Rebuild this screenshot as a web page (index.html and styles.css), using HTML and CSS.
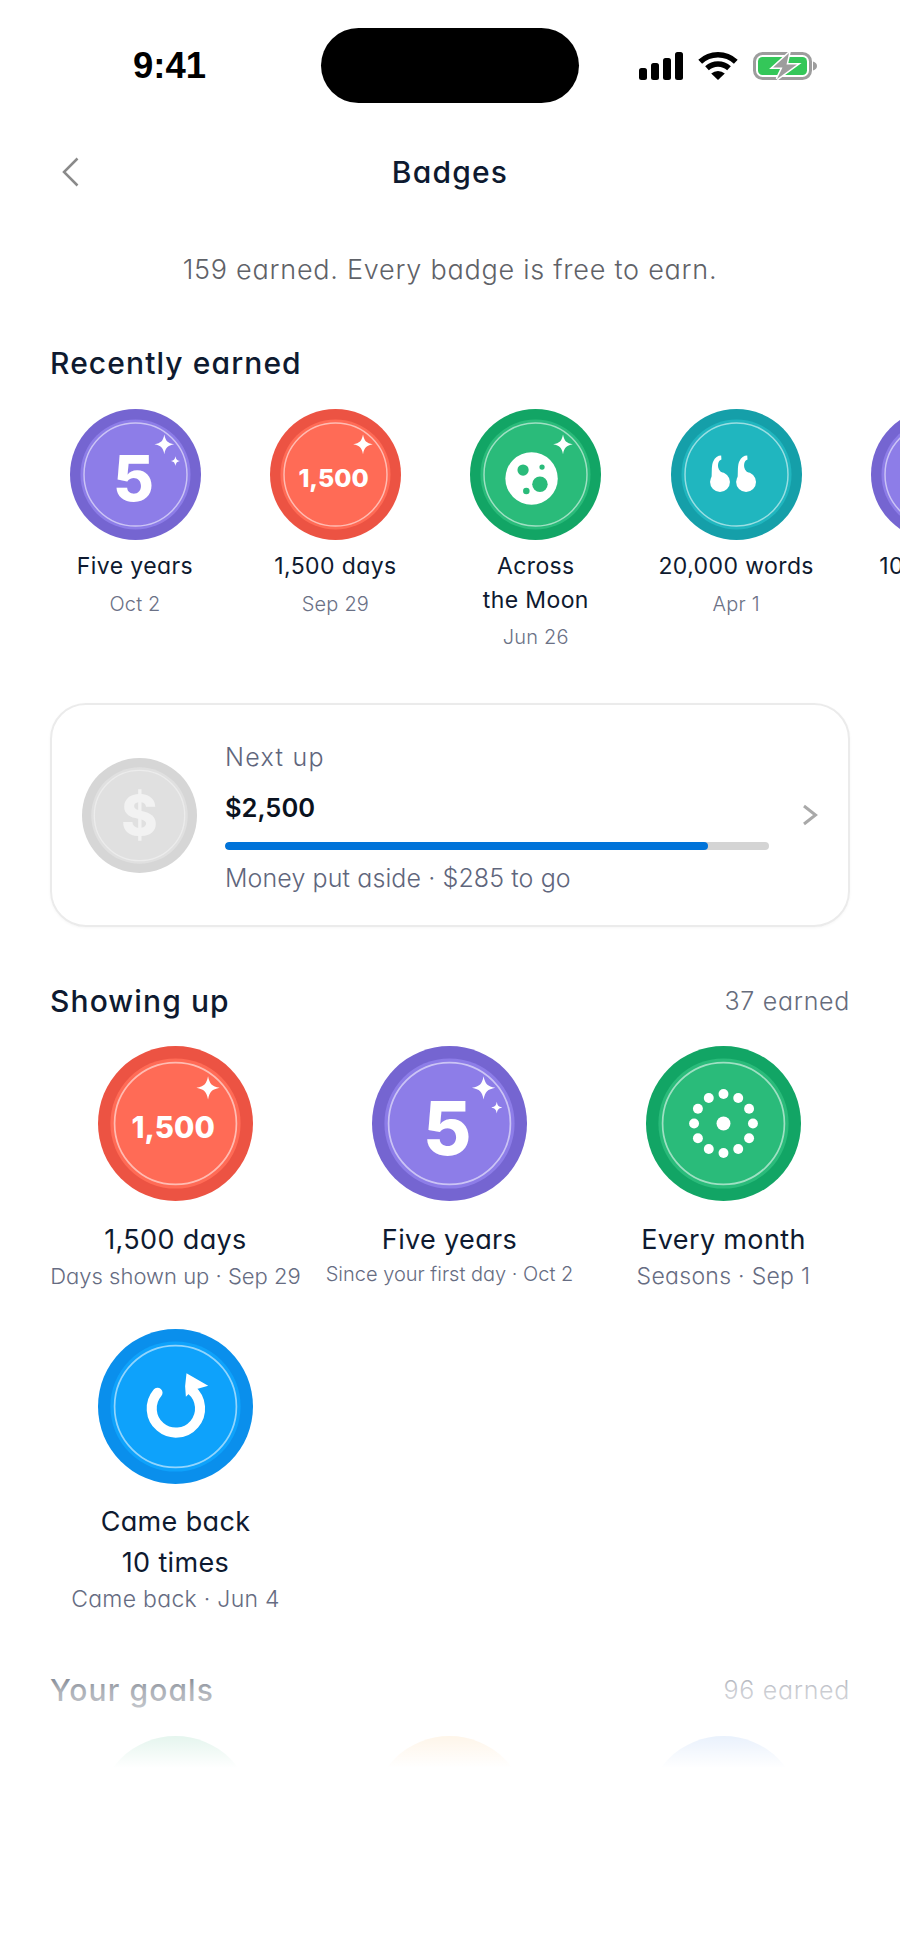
FILE: index.html
```html
<!DOCTYPE html>
<html lang="en">
<head>
<meta charset="utf-8">
<title>Badges</title>
<link rel="stylesheet" href="styles.css">
</head>
<body>
<div class="page">
  <div class="status">
    <div class="time">9:41</div>
    <div class="island"></div>
    <div class="status-icons">
      <svg class="i-signal" viewBox="0 0 44 28"><rect x="0" y="16" width="8" height="12" rx="2.5"/><rect x="12" y="11" width="8" height="17" rx="2.5"/><rect x="24" y="6" width="8" height="22" rx="2.5"/><rect x="36" y="0" width="8" height="28" rx="2.5"/></svg>
      <svg class="i-wifi" viewBox="0 0 40 28"><path class="wifi-arc" d="M2.2 9.8A26 26 0 0 1 37.8 9.8"/><path class="wifi-arc" d="M9 16.2A16.5 16.5 0 0 1 31 16.2"/><path d="M13.2 21.4L20 28L26.8 21.4A10.5 10.5 0 0 0 13.2 21.4Z"/></svg>
      <svg class="i-batt" viewBox="0 0 64 28"><rect class="batt-shell" x="1.5" y="1.5" width="56" height="25" rx="8"/><path class="batt-cap" d="M60 9.5C62.5 10 64 12 64 14S62.5 18 60 18.5Z"/><rect class="batt-fill" x="5" y="5" width="49" height="18" rx="4.5"/><path class="batt-bolt" d="M36 1L20 15.5H29.5L24 27L44 12.5H33.5Z"/></svg>
    </div>
  </div>

  <div class="nav">
    <svg class="chev-back" viewBox="0 0 17 30"><path d="M15.5 1.5L2 15L15.5 28.5"/></svg>
    <h1 class="title">Badges</h1>
    <span></span>
  </div>

  <p class="intro">159 earned. Every badge is free to earn.</p>

  <div class="sec-head sec-first"><h2 class="sec-title">Recently earned</h2></div>
  <div class="strip">
    <div class="item">
      <svg class="badge-sm purple" viewBox="0 0 100 100"><circle class="o" cx="50" cy="50" r="50"/><circle class="n" cx="50" cy="50" r="42"/><circle class="r" cx="50" cy="50" r="39.3"/><text class="num five" x="48.5" y="70">5</text><path class="w" d="M72 19.500C73 24.500 74.500 26 79.500 27C74.500 28 73 29.500 72 34.500C71 29.500 69.500 28 64.500 27C69.500 26 71 24.500 72 19.500Z"/><path class="w" d="M80.500 36C81 38.500 81.500 39 84 39.700C81.500 40.400 81 41 80.500 43.500C80 41 79.500 40.400 77 39.700C79.500 39 80 38.500 80.500 36Z"/></svg>
      <div class="name">Five years</div>
      <div class="date">Oct 2</div>
    </div>
    <div class="item">
      <svg class="badge-sm red" viewBox="0 0 100 100"><circle class="o" cx="50" cy="50" r="50"/><circle class="n" cx="50" cy="50" r="42"/><circle class="r" cx="50" cy="50" r="39.3"/><text class="num count" x="48.5" y="59.500">1,500</text><path class="w" d="M71 19.500C72 24.500 73.500 26 78.500 27C73.500 28 72 29.500 71 34.500C70 29.500 68.500 28 63.500 27C68.500 26 70 24.500 71 19.500Z"/></svg>
      <div class="name">1,500 days</div>
      <div class="date">Sep 29</div>
    </div>
    <div class="item">
      <svg class="badge-sm green" viewBox="0 0 100 100"><circle class="o" cx="50" cy="50" r="50"/><circle class="n" cx="50" cy="50" r="42"/><circle class="r" cx="50" cy="50" r="39.3"/><circle class="w" cx="47" cy="53" r="20"/><circle class="c" cx="40.500" cy="46.600" r="4.300"/><circle class="c" cx="55" cy="44.300" r="2"/><circle class="c" cx="53.400" cy="57.500" r="5.900"/><circle class="c" cx="43" cy="62.600" r="2.500"/><path class="w" d="M71 19.500C72 24.500 73.500 26 78.500 27C73.500 28 72 29.500 71 34.500C70 29.500 68.500 28 63.500 27C68.500 26 70 24.500 71 19.500Z"/></svg>
      <div class="name">Across<br>the Moon</div>
      <div class="date">Jun 26</div>
    </div>
    <div class="item">
      <svg class="badge-sm teal" viewBox="0 0 100 100"><circle class="o" cx="50" cy="50" r="50"/><circle class="n" cx="50" cy="50" r="42"/><circle class="r" cx="50" cy="50" r="39.3"/><g class="w"><circle cx="37.400" cy="55.700" r="7.600"/><path d="M38.300 35.500L38.500 38.600C36.500 39.200 35.600 41.500 36 44.500C36.400 47 38.500 48.500 41.500 50.500L37 58L31 52C31.300 47 30.800 43 32.300 39.800C33.500 37 35.800 35.500 38.300 35.500Z"/><circle cx="57.300" cy="55.700" r="7.600"/><path d="M58.200 35.500L58.400 38.600C56.400 39.200 55.500 41.500 55.900 44.500C56.300 47 58.400 48.500 61.400 50.500L56.900 58L50.900 52C51.200 47 50.700 43 52.200 39.800C53.400 37 55.700 35.500 58.200 35.500Z"/></g></svg>
      <div class="name">20,000 words</div>
      <div class="date">Apr 1</div>
    </div>
    <div class="item">
      <svg class="badge-sm purple" viewBox="0 0 100 100"><circle class="o" cx="50" cy="50" r="50"/><circle class="n" cx="50" cy="50" r="42"/><circle class="r" cx="50" cy="50" r="39.3"/></svg>
      <div class="name">10 months</div>
    </div>
  </div>

  <div class="card">
    <svg class="coin" viewBox="0 0 100 100"><circle class="o" cx="50" cy="50" r="50"/><circle class="n" cx="50" cy="50" r="42"/><circle class="r" cx="50" cy="50" r="39.3"/><text class="num dollar" x="50" y="67">$</text></svg>
    <div class="card-body">
      <div class="card-label">Next up</div>
      <div class="card-amount">$2,500</div>
      <div class="bar"><div class="bar-fill" style="width:88.700%"></div></div>
      <div class="card-note">Money put aside · $285 to go</div>
    </div>
    <svg class="chev-next" viewBox="0 0 16 22"><path d="M2 2L13.500 11L2 20"/></svg>
  </div>

  <div class="sec-head"><h2 class="sec-title">Showing up</h2><span class="sec-count">37 earned</span></div>
  <div class="grid">
    <div class="cell">
      <svg class="badge-lg red" viewBox="0 0 100 100"><circle class="o" cx="50" cy="50" r="50"/><circle class="n" cx="50" cy="50" r="42"/><circle class="r" cx="50" cy="50" r="39.3"/><text class="num count" x="48.5" y="59.500">1,500</text><path class="w" d="M71 19.500C72 24.500 73.500 26 78.500 27C73.500 28 72 29.500 71 34.500C70 29.500 68.500 28 63.500 27C68.500 26 70 24.500 71 19.500Z"/></svg>
      <div class="cell-name">1,500 days</div>
      <div class="cell-sub cell-sub-fit">Days shown up · Sep 29</div>
    </div>
    <div class="cell">
      <svg class="badge-lg purple" viewBox="0 0 100 100"><circle class="o" cx="50" cy="50" r="50"/><circle class="n" cx="50" cy="50" r="42"/><circle class="r" cx="50" cy="50" r="39.3"/><text class="num five" x="48.5" y="70">5</text><path class="w" d="M72 19.500C73 24.500 74.500 26 79.500 27C74.500 28 73 29.500 72 34.500C71 29.500 69.500 28 64.500 27C69.500 26 71 24.500 72 19.500Z"/><path class="w" d="M80.500 36C81 38.500 81.500 39 84 39.700C81.500 40.400 81 41 80.500 43.500C80 41 79.500 40.400 77 39.700C79.500 39 80 38.500 80.500 36Z"/></svg>
      <div class="cell-name">Five years</div>
      <div class="cell-sub cell-sub-small">Since your first day · Oct 2</div>
    </div>
    <div class="cell">
      <svg class="badge-lg green" viewBox="0 0 100 100"><circle class="o" cx="50" cy="50" r="50"/><circle class="n" cx="50" cy="50" r="42"/><circle class="r" cx="50" cy="50" r="39.3"/><g class="w"><circle cx="50" cy="50" r="4.500"/><circle cx="69" cy="50" r="3.200"/><circle cx="66.500" cy="59.500" r="3.200"/><circle cx="59.500" cy="66.500" r="3.200"/><circle cx="50" cy="69" r="3.200"/><circle cx="40.500" cy="66.500" r="3.200"/><circle cx="33.500" cy="59.500" r="3.200"/><circle cx="31" cy="50" r="3.200"/><circle cx="33.500" cy="40.500" r="3.200"/><circle cx="40.500" cy="33.500" r="3.200"/><circle cx="50" cy="31" r="3.200"/><circle cx="59.500" cy="33.500" r="3.200"/><circle cx="66.500" cy="40.500" r="3.200"/></g></svg>
      <div class="cell-name">Every month</div>
      <div class="cell-sub">Seasons · Sep 1</div>
    </div>
    <div class="cell">
      <svg class="badge-lg blue" viewBox="0 0 100 100"><circle class="o" cx="50" cy="50" r="50"/><circle class="n" cx="50" cy="50" r="42"/><circle class="r" cx="50" cy="50" r="39.3"/><path class="loop" d="M38.400 41.100A15.600 15.600 0 1 0 60.400 39.400"/><path class="w" d="M57.100 28.600L71.100 36.600L61 39.500L56.700 43.700L56.200 37Z"/></svg>
      <div class="cell-name">Came back<br>10 times</div>
      <div class="cell-sub">Came back · Jun 4</div>
    </div>
  </div>

  <div class="sec-head sec-goals"><h2 class="sec-title">Your goals</h2><span class="sec-count">96 earned</span></div>
  <div class="grid grid-goals">
    <div class="cell"><svg class="badge-lg goal-green" viewBox="0 0 100 100"><circle class="o" cx="50" cy="50" r="50"/></svg></div>
    <div class="cell"><svg class="badge-lg goal-orange" viewBox="0 0 100 100"><circle class="o" cx="50" cy="50" r="50"/></svg></div>
    <div class="cell"><svg class="badge-lg goal-blue" viewBox="0 0 100 100"><circle class="o" cx="50" cy="50" r="50"/></svg></div>
  </div>

  <div class="fade"></div>
</div>
</body>
</html>
```

FILE: styles.css
```css
* { box-sizing: border-box; }
html, body { margin: 0; padding: 0; background: #fff; }
body {
  font-family: Inter, "Noto Sans", "Liberation Sans", sans-serif;
  font-feature-settings: "cv11" 1;
  color: #0e1a30;
}
.page { position: relative; width: 900px; height: 1955px; overflow: hidden; background: #fff; }

/* status bar */
.status { display: grid; grid-template-columns: 321px 258px 1fr; padding-top: 28px; height: 103px; }
.time { padding-left: 133px; font: 700 36.5px/75px "Liberation Sans", sans-serif; color: #000; }
.island { height: 75px; border-radius: 37.5px; background: #000; }
.status-icons { display: flex; align-items: center; gap: 15px; padding-left: 60px; }
.status-icons svg { display: block; height: 28px; }
.i-signal { width: 44px; }
.i-wifi { width: 40px; }
.i-batt { width: 64px; }
.wifi-arc { fill: none; stroke: #000; stroke-width: 5.5; }
.batt-shell { fill: none; stroke: #9d9d9d; stroke-width: 3; }
.batt-cap { fill: #9d9d9d; }
.batt-fill { fill: #34c759; }
.batt-bolt { fill: #9d9d9d; stroke: #fff; stroke-width: 3; paint-order: stroke; }

/* nav */
.nav { display: grid; grid-template-columns: 1fr auto 1fr; align-items: center; height: 60px; margin-top: 39px; padding-left: 62px; padding-right: 62px; }
.chev-back { width: 17px; height: 30px; }
.chev-back path { fill: none; stroke: #8a8a8a; stroke-width: 2.5; }
.title { margin: 0; font-size: 30px; line-height: 60px; font-weight: 500; letter-spacing: 1.2px; }
.intro { margin: 48px 0 0; text-align: center; font-size: 27px; line-height: 40px; font-weight: 300; letter-spacing: .75px; color: #5f6268; }

/* section heads */
.sec-head { display: flex; justify-content: space-between; align-items: center; height: 40px; margin: 54px 50px 0; }
.sec-first { margin-top: 53px; }
.sec-goals { margin-top: 56px; }
.sec-title { margin: 0; font-size: 30px; line-height: 40px; font-weight: 500; letter-spacing: 1.1px; }
.sec-count { font-size: 25px; font-weight: 300; letter-spacing: .7px; color: #666c7c; }

/* recent strip */
.strip { display: flex; gap: 29.4px; margin-top: 26px; padding-left: 49.5px; }
.item { flex: none; width: 171px; display: flex; flex-direction: column; align-items: center; text-align: center; }
.badge-sm { display: block; width: 131px; height: 131px; }
.name { margin-top: 10px; font-size: 23px; line-height: 33.5px; font-weight: 400; letter-spacing: .4px; white-space: nowrap; }
.date { margin-top: 7px; font-size: 20px; line-height: 26px; font-weight: 300; letter-spacing: .2px; color: #6b7186; }

/* badge parts */
.o { fill: var(--outer); }
.n { fill: var(--inner); }
.r { fill: none; stroke: #fff; stroke-opacity: .55; stroke-width: 1.1; }
.w { fill: #fff; }
.c { fill: var(--inner); }
.loop { fill: none; stroke: #fff; stroke-width: 6.5; stroke-linecap: round; }
.num { fill: #fff; text-anchor: middle; font-family: Inter, sans-serif; font-weight: 800; }
.five { font-size: 48px; }
.count { font-size: 19px; }
.dollar { font-size: 48px; fill: #f2f2f2; }
.purple { --outer: #7565d1; --inner: #8d7de8; }
.red { --outer: #ec5343; --inner: #ff6b56; }
.green { --outer: #12a565; --inner: #2abb7a; }
.teal { --outer: #159fa9; --inner: #20b6bf; }
.blue { --outer: #0a8fec; --inner: #0ea2fb; }
.goal-green { --outer: #12a565; }
.goal-orange { --outer: #f9a63a; }
.goal-blue { --outer: #3b82e6; }

/* next up card */
.card { display: flex; align-items: center; height: 224px; margin: 53px 50px 0 50px; padding-left: 29.5px; border: 2px solid #ebebeb; border-radius: 36px; box-shadow: 0 1px 3px rgba(0,0,0,.04); }
.coin { flex: none; display: block; width: 115px; height: 115px; --outer: #d6d6d6; --inner: #e0e0e0; }
.coin .r { stroke: #ececec; stroke-opacity: 1; }
.card-body { flex: none; width: 544px; margin-left: 28.5px; padding-top: 5px; }
.card-label { font-size: 25px; line-height: 36px; font-weight: 300; letter-spacing: 1.3px; color: #5f667c; }
.card-amount { margin-top: 13px; font-size: 25.5px; line-height: 40px; font-weight: 600; color: #0a1220; }
.bar { height: 8px; margin-top: 14px; border-radius: 4px; background: #d4d4d4; overflow: hidden; }
.bar-fill { height: 100%; border-radius: 4px; background: #0073d9; }
.card-note { margin-top: 10px; font-size: 25px; line-height: 36px; font-weight: 300; letter-spacing: .1px; color: #5f667c; }
.chev-next { flex: none; width: 16px; height: 22px; margin-left: 33px; }
.chev-next path { fill: none; stroke: #a9a9a9; stroke-width: 3; }

/* grid */
.grid { display: grid; grid-template-columns: repeat(3, 252px); column-gap: 22px; row-gap: 38px; margin: 25px 50px 0 49.5px; }
.grid-goals { margin-top: 26px; }
.cell { display: flex; flex-direction: column; align-items: center; text-align: center; }
.badge-lg { display: block; width: 155px; height: 155px; }
.cell-name { margin-top: 17.5px; font-size: 27px; line-height: 41px; font-weight: 400; letter-spacing: .35px; }
.cell-sub { margin-top: 1px; font-size: 23px; line-height: 30px; font-weight: 300; letter-spacing: .3px; color: #666c82; white-space: nowrap; }
.cell-sub-fit { font-size: 22px; letter-spacing: 0; }
.cell-sub-small { font-size: 20px; line-height: 26px; letter-spacing: 0; }

/* bottom fade */
.fade { position: absolute; left: 0; right: 0; top: 1640px; bottom: 0; background: linear-gradient(to bottom, rgba(255,255,255,0) 0, rgba(255,255,255,.65) 50px, rgba(255,255,255,.89) 96px, #fff 128px); }
```
